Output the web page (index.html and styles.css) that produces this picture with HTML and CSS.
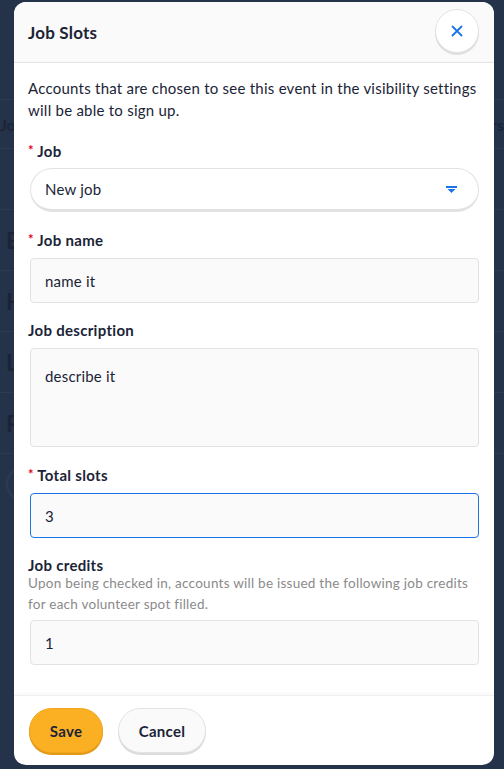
FILE: index.html
```html
<!DOCTYPE html>
<html>
<head>
<meta charset="utf-8">
<link rel="stylesheet" href="styles.css">
</head>
<body>
<div class="page">
  <div class="page-row page-row-head"><span class="page-l">Jo</span><span class="page-r">rs</span></div>
  <div class="page-row page-row-blank"></div>
  <div class="page-row"><span class="page-l">E</span></div>
  <div class="page-row"><span class="page-l">H</span></div>
  <div class="page-row"><span class="page-l">L</span></div>
  <div class="page-row"><span class="page-l">P</span></div>
  <div class="page-row"><span class="page-circle"></span></div>
</div>

<div class="modal">
  <div class="modal-header">
    <h1 class="modal-title">Job Slots</h1>
    <button class="close-btn" aria-label="Close">
      <svg width="12" height="12" viewBox="0 0 12 12"><path d="M1.5 1.5 L10.5 10.5 M10.5 1.5 L1.5 10.5" stroke="#1a73e8" stroke-width="1.8" stroke-linecap="round" fill="none"/></svg>
    </button>
  </div>
  <div class="modal-body">
    <p class="intro">Accounts that are chosen to see this event in the visibility settings will be able to sign up.</p>

    <div class="field field-first">
      <div class="label"><span class="req">*</span> Job</div>
      <div class="select">
        <span>New job</span>
        <svg class="caret" width="11" height="7" viewBox="0 0 11 7"><rect x="0" y="0" width="11" height="2" fill="#1a73e8"/><path d="M1.5 3 H9.5 L5.5 7 Z" fill="#1a73e8"/></svg>
      </div>
    </div>

    <div class="field">
      <div class="label"><span class="req">*</span> Job name</div>
      <div class="input">name it</div>
    </div>

    <div class="field">
      <div class="label">Job description</div>
      <div class="input textarea">describe it</div>
    </div>

    <div class="field">
      <div class="label"><span class="req">*</span> Total slots</div>
      <div class="input input-focus">3</div>
    </div>

    <div class="field">
      <div class="label">Job credits</div>
      <div class="help">Upon being checked in, accounts will be issued the following job credits for each volunteer spot filled.</div>
      <div class="input">1</div>
    </div>
  </div>
  <div class="modal-footer">
    <button class="btn btn-save">Save</button>
    <button class="btn btn-cancel">Cancel</button>
  </div>
</div>
</body>
</html>
```
FILE: styles.css
```css
* { box-sizing: border-box; }
html, body { margin: 0; padding: 0; }
body {
  width: 504px;
  height: 769px;
  overflow: hidden;
  background: #24324a;
  font-family: Lato, "Open Sans", sans-serif;
  position: relative;
}
.page {
  padding-top: 99px;
  display: flex;
  flex-direction: column;
}
.page-row {
  height: 61px;
  border-top: 1px solid #2c3a52;
  display: flex;
  align-items: center;
  justify-content: space-between;
  color: #1b2538;
  font-size: 22px;
  font-weight: 700;
  padding: 0 0 0 6px;
}
.page-row-head { height: 49px; font-size: 16px; padding-left: 0; }
.page-r { margin-right: 0; }
.page-circle {
  width: 34px; height: 34px; border-radius: 50%;
  border: 2px solid #2c3a52;
}

.modal {
  position: absolute;
  left: 14px;
  top: 2px;
  width: 480px;
  height: 763px;
  background: #fff;
  border-radius: 12px;
  overflow: hidden;
  display: flex;
  flex-direction: column;
  color: #1b2437;
  letter-spacing: 0.2px;
}
.modal-header {
  height: 61px;
  flex: none;
  background: #fafafa;
  border-bottom: 1px solid #e3e3e3;
  display: flex;
  align-items: center;
  justify-content: space-between;
  padding: 0 15px 0 14px;
}
.modal-title {
  margin: 0;
  font-size: 17px;
  font-weight: 700;
  color: #1b2437;
  letter-spacing: 0.2px;
}
.close-btn {
  width: 44px;
  height: 44px;
  border-radius: 50%;
  background: #fff;
  border: 1px solid #e2e2e2;
  box-shadow: 0 2px 0 #dedede;
  display: flex;
  align-items: center;
  justify-content: center;
  padding: 0;
  margin-top: -2px;
}
.modal-body {
  flex: 1;
  padding: 14px 15px 0 14px;
}
.intro {
  margin: 0 -6px 0 0;
  font-size: 15px;
  line-height: 22px;
  letter-spacing: 0.24px;
}
.field { margin-top: 17px; }
.field-first { margin-top: 19px; }
.label {
  font-size: 15px;
  font-weight: 700;
  line-height: 20px;
  margin-bottom: 8px;
  letter-spacing: 0.3px;
}
.field-first .label { margin-bottom: 7px; }
.req { color: #e0001b; font-size: 13px; vertical-align: 2px; }
.select {
  margin-left: 2px;
  height: 44px;
  border: 1px solid #e2e2e2;
  border-bottom-width: 3px;
  border-radius: 22px;
  background: #fff;
  display: flex;
  align-items: center;
  justify-content: space-between;
  padding: 0 21px 0 14px;
  font-size: 15px;
}
.caret { display: block; margin-top: 1px; }
.input {
  margin-left: 2px;
  height: 45px;
  border: 1px solid #e2e2e2;
  border-radius: 4px;
  background: #fafafa;
  padding: 0 14px;
  display: flex;
  align-items: center;
  font-size: 15px;
}
.textarea {
  height: 99px;
  align-items: flex-start;
  padding-top: 16px;
  line-height: 22px;
}
.input-focus { border-color: #1a73e8; }
.help {
  font-size: 13.5px;
  line-height: 21px;
  letter-spacing: 0.25px;
  color: #8a8a8a;
  margin-top: -10px;
  margin-bottom: 5px;
  margin-right: -6px;
}
.modal-footer {
  flex: none;
  border-top: 1px solid #f0f0f0;
  box-shadow: 0 -2px 4px rgba(0,0,0,0.03);
  padding: 12px 15px 10px 15px;
  display: flex;
  gap: 15px;
  height: 70px;
}
.btn {
  font-family: Lato, "Open Sans", sans-serif;
  font-size: 15px;
  font-weight: 700;
  letter-spacing: 0.3px;
  color: #1b2437;
  height: 45px;
  border-radius: 23px;
  padding: 0;
}
.btn-save {
  width: 74px;
  background: #fbb024;
  border: 1px solid #f0a61c;
  box-shadow: 0 2px 0 #e09a18;
}
.btn-cancel {
  width: 88px;
  background: #fafafa;
  border: 1px solid #e2e2e2;
  box-shadow: 0 2px 0 #dcdcdc;
}
```
